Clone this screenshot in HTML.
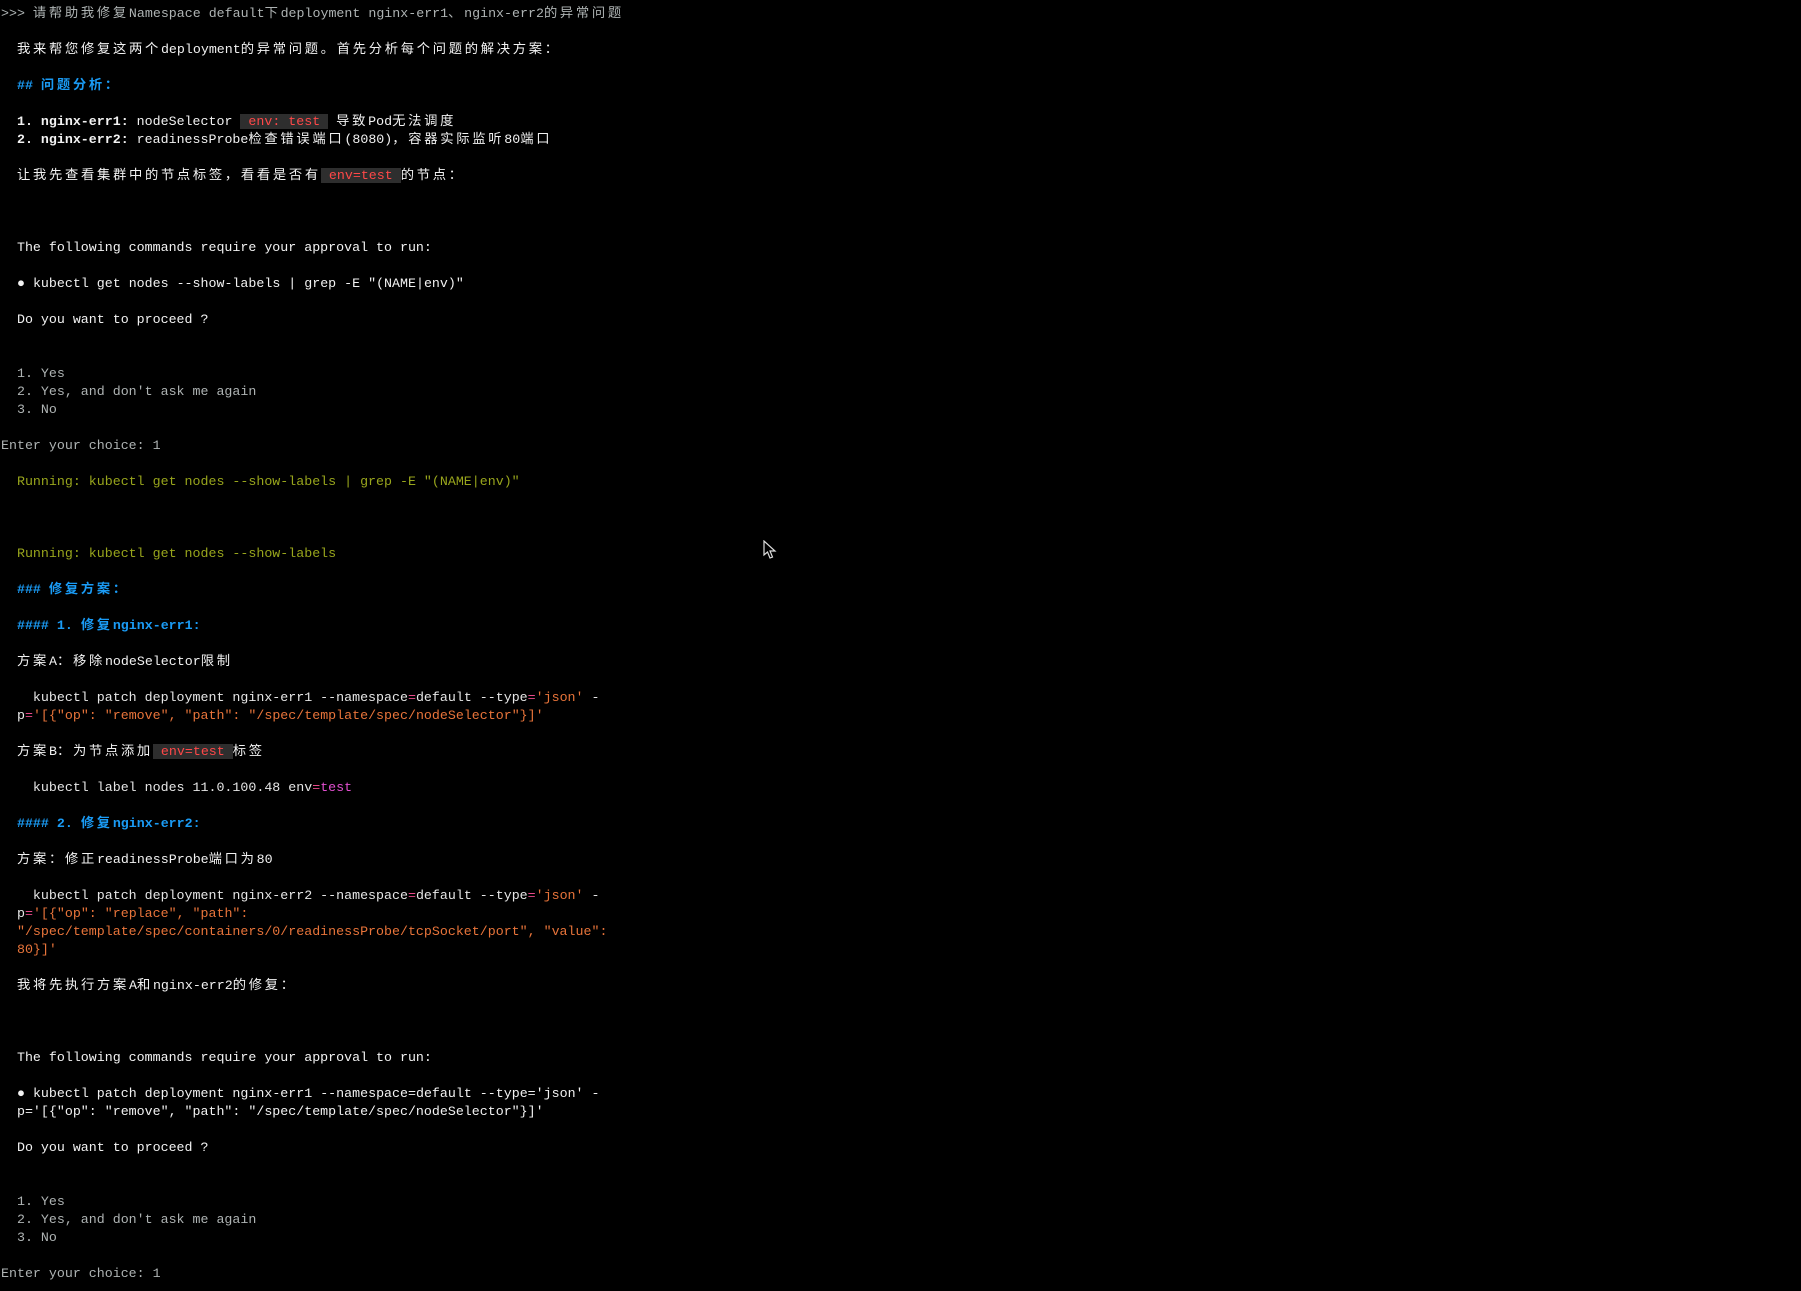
<!DOCTYPE html>
<html><head><meta charset="utf-8"><style>
html,body{margin:0;padding:0;background:#000;width:1801px;height:1291px;overflow:hidden}
pre{margin:0;padding:5px 0 0 1px;font-family:"Liberation Mono","Noto Sans CJK SC",monospace;font-size:13.3px;line-height:18px;color:#f2f2f2;font-weight:normal;white-space:pre}
.c{font-family:"Noto Sans CJK SC","WenQuanYi Zen Hei",sans-serif;letter-spacing:2.7px;font-size:13.3px;line-height:10px}
.g{color:#aeb3b3}
.b{color:#1a9bf5;font-weight:bold}
.bb{font-weight:bold}
.r{color:#ff4848;background:#2e2e2e}
.gr{color:#98a51c}
.o{color:#e8743a}
.n{color:#e6e6e6}
.p{color:#e84a8a}
.m{color:#e24fd0}
.dot{display:inline-block;width:8px;line-height:10px}
</style></head><body>
<pre><span class="g">&gt;&gt;&gt; <span class="c">请帮助我修复</span>Namespace default<span class="c">下</span>deployment nginx-err1<span class="c">、</span>nginx-err2<span class="c">的异常问题</span></span>

  <span class="c">我来帮您修复这两个</span>deployment<span class="c">的异常问题。首先分析每个问题的解决方案：</span>

  <span class="b">## <span class="c">问题分析：</span></span>

  <span class="bb">1. nginx-err1:</span> nodeSelector <span class="r"> env: test </span> <span class="c">导致</span>Pod<span class="c">无法调度</span>
  <span class="bb">2. nginx-err2:</span> readinessProbe<span class="c">检查错误端口</span>(8080)<span class="c">，容器实际监听</span>80<span class="c">端口</span>

  <span class="c">让我先查看集群中的节点标签，看看是否有</span><span class="r"> env=test </span><span class="c">的节点：</span>



  The following commands require your approval to run:

  <span class="dot">●</span> kubectl get nodes --show-labels | grep -E "(NAME|env)"

  Do you want to proceed ?


<span class="g">  1. Yes
  2. Yes, and don't ask me again
  3. No

Enter your choice: 1</span>

<span class="gr">  Running: kubectl get nodes --show-labels | grep -E "(NAME|env)"</span>



<span class="gr">  Running: kubectl get nodes --show-labels</span>

  <span class="b">### <span class="c">修复方案：</span></span>

  <span class="b">#### 1. <span class="c">修复</span>nginx-err1:</span>

  <span class="c">方案</span>A<span class="c">：移除</span>nodeSelector<span class="c">限制</span>

<span class="n">    kubectl patch deployment nginx-err1 --namespace<span class="p">=</span>default --type<span class="p">=</span><span class="o">'json'</span> -
  p<span class="p">=</span><span class="o">'[{"op": "remove", "path": "/spec/template/spec/nodeSelector"}]'</span></span>

  <span class="c">方案</span>B<span class="c">：为节点添加</span><span class="r"> env=test </span><span class="c">标签</span>

<span class="n">    kubectl label nodes 11.0.100.48 env<span class="p">=</span><span class="m">test</span></span>

  <span class="b">#### 2. <span class="c">修复</span>nginx-err2:</span>

  <span class="c">方案：修正</span>readinessProbe<span class="c">端口为</span>80

<span class="n">    kubectl patch deployment nginx-err2 --namespace<span class="p">=</span>default --type<span class="p">=</span><span class="o">'json'</span> -
  p<span class="p">=</span><span class="o">'[{"op": "replace", "path":
  "/spec/template/spec/containers/0/readinessProbe/tcpSocket/port", "value":
  80}]'</span></span>

  <span class="c">我将先执行方案</span>A<span class="c">和</span>nginx-err2<span class="c">的修复：</span>



  The following commands require your approval to run:

  <span class="dot">●</span> kubectl patch deployment nginx-err1 --namespace=default --type='json' -
  p='[{"op": "remove", "path": "/spec/template/spec/nodeSelector"}]'

  Do you want to proceed ?


<span class="g">  1. Yes
  2. Yes, and don't ask me again
  3. No

Enter your choice: 1</span></pre>
<svg style="position:absolute;left:763px;top:540px" width="14" height="20" viewBox="0 0 14 20"><path d="M1 1 L1 15 L4.5 12 L7 18 L9.5 17 L7 11 L12 11 Z" fill="#000" stroke="#ddd" stroke-width="1.2"/></svg>
</body></html>
